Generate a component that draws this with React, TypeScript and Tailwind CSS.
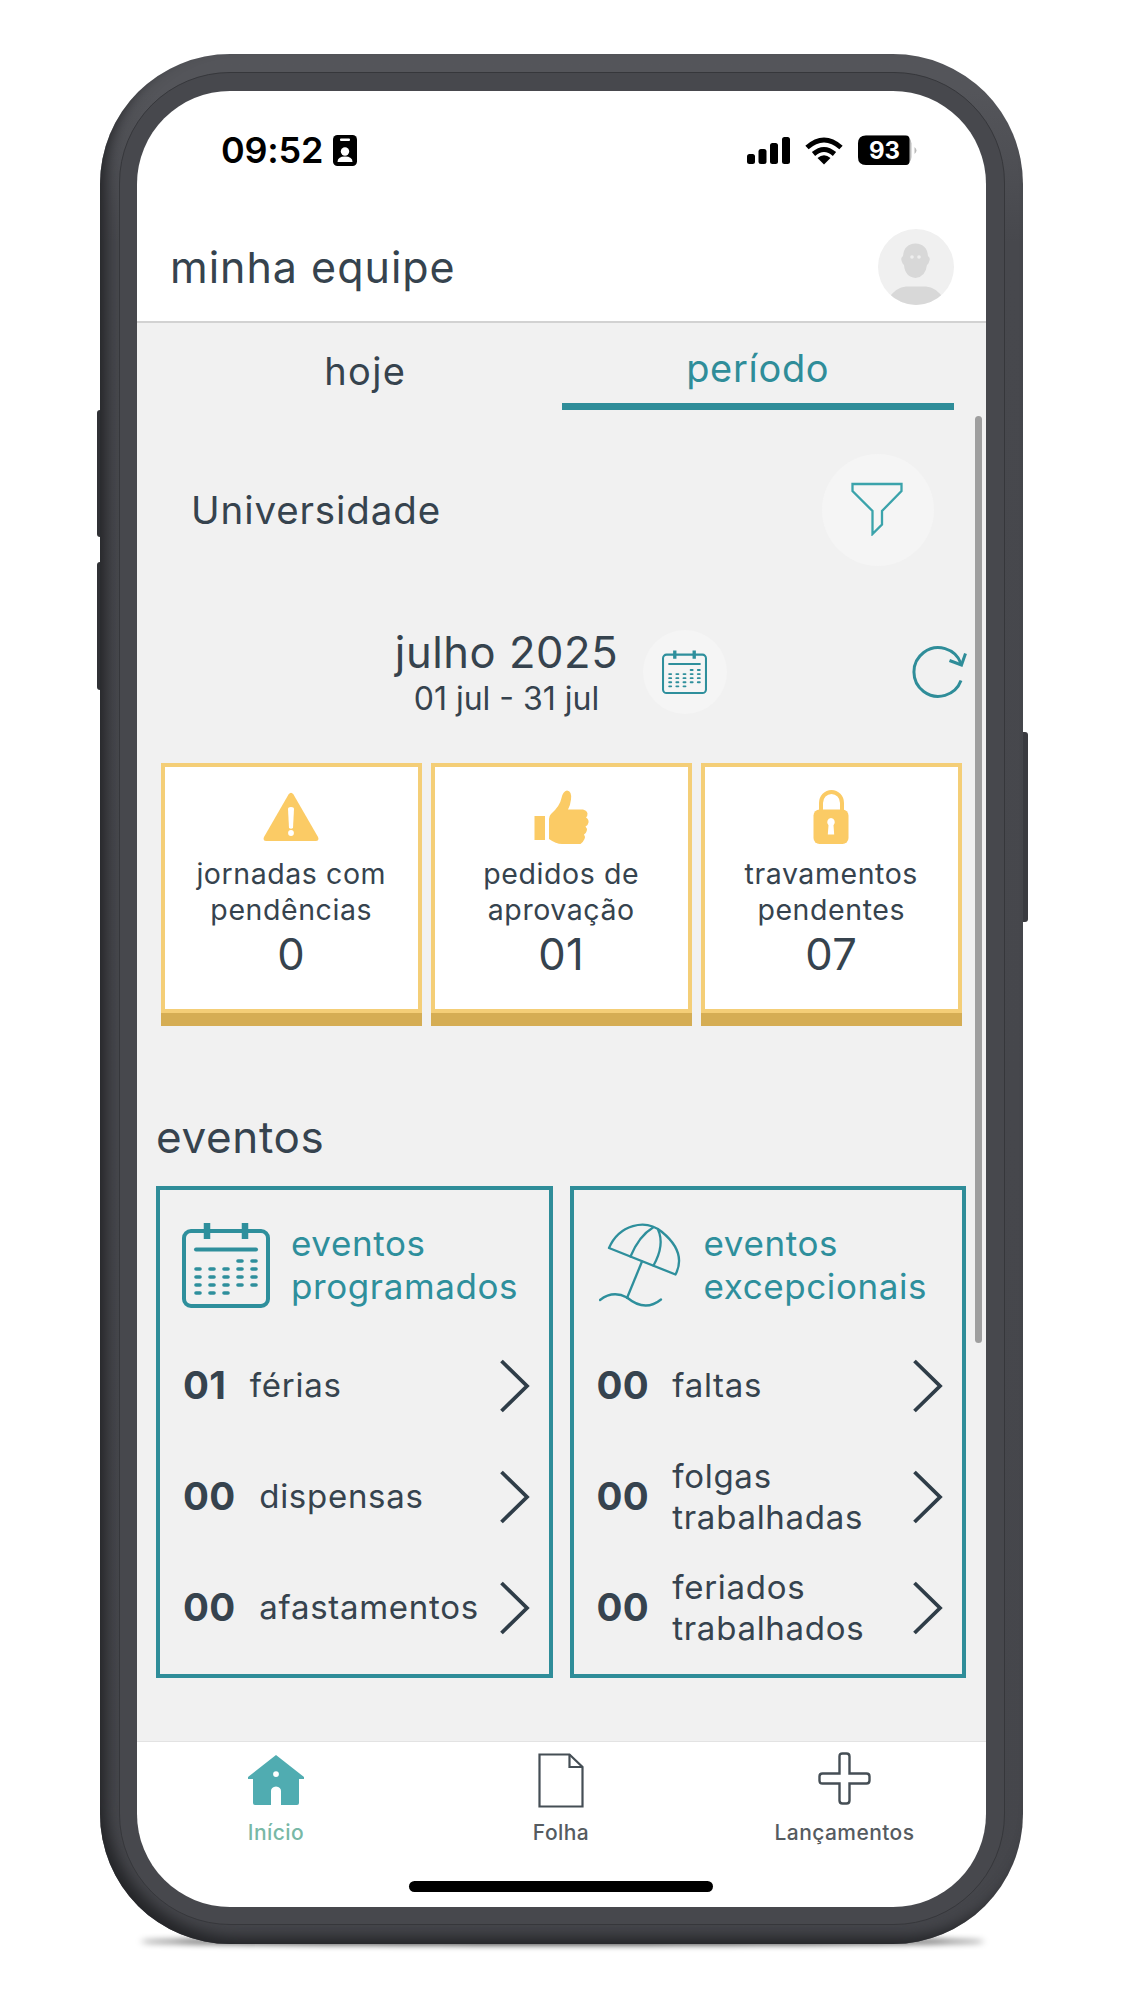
import type { ReactNode } from "react"

const programados = [
  { count: "01", label: ["férias"] },
  { count: "00", label: ["dispensas"] },
  { count: "00", label: ["afastamentos"] },
]

const excepcionais = [
  { count: "00", label: ["faltas"] },
  { count: "00", label: ["folgas", "trabalhadas"] },
  { count: "00", label: ["feriados", "trabalhados"] },
]

function CalendarIcon({ className, stroke }: { className: string; stroke: number }) {
  const cols = [16, 30, 44, 58, 72]
  return (
    <svg viewBox="0 0 88 86" className={className} fill="none" stroke="#2e8f9c" strokeWidth={stroke}>
      <rect x="2" y="9" width="84" height="75" rx="7" />
      <path d="M25 1v16M63 1v16" strokeWidth="6.500" />
      <path d="M14 27.500h60" strokeLinecap="round" />
      {cols.map((x, i) => (i < 3 ? [47, 55, 63, 71] : [39, 47, 55, 63]).map((y) => <path key={x + "-" + y} d={`M${x - 2} ${y}h4`} strokeLinecap="round" strokeWidth="3.600" />))}
    </svg>
  )
}

function WarningIcon() {
  return (
    <svg viewBox="0 0 56 54" className="h-[54px] w-[56px]" fill="#fbcb65">
      <path d="M25.500 4.500q2.500-3.500 5 0L55 47q1.500 4-2 4H3q-3.500 0-2-4z" />
      <path d="M25 19q0-2 3-2t3 2l-1 19q-2 1.500-4 0z" fill="#fff" />
      <circle cx="28" cy="43" r="2.900" fill="#fff" />
    </svg>
  )
}

function ThumbIcon() {
  return (
    <svg viewBox="0 0 55 54" className="h-[54px] w-[55px]" fill="#fbcb65">
      <rect x="0.500" y="26" width="10.500" height="24" />
      <path d="M15 29q0-3 2-5 9-8 10.500-16Q29 1 33 .5q5 .5 4 9-.5 5-3 10h15q4 1 4.500 4 .2 2.500-1.500 4 3 2 2.500 5-.3 2.500-3 4 2 2 1.200 4.500-.7 2.500-2.700 3.500 1.500 2 .5 4.500t-4 5H28q-6 0-13-5z" />
    </svg>
  )
}

function LockIcon() {
  return (
    <svg viewBox="0 0 36 54" className="h-[54px] w-[36px]" fill="#fbcb65">
      <path d="M8 22V13a10.500 11 0 0 1 21 0v9" fill="none" stroke="#fbcb65" strokeWidth="4" />
      <rect x="0.500" y="19.500" width="35" height="34.500" rx="6" />
      <path d="M18 28a4.200 4.200 0 0 1 2.500 7.200l.7 9.300h-6.400l.7-9.300A4.200 4.200 0 0 1 18 28z" fill="#fff" />
    </svg>
  )
}

function UmbrellaIcon() {
  return (
    <svg viewBox="0 0 82 84" className="ml-[3px] h-[84px] w-[82px] shrink-0" fill="none" stroke="#2e8f9c" strokeWidth="2.300" strokeLinecap="round" strokeLinejoin="round">
      <path d="M10 25C20 2 46-5 63 9S84 37 76.500 51.500z" />
      <path d="M31.500 33.500Q40 13 54 4.500" />
      <path d="M59 6.500Q66 22 54.500 42.500" />
      <path d="M43 38.500 28 75" />
      <path d="M1 77Q14 67 28 74.500q18 15 34 2" />
    </svg>
  )
}

function AlertCard({ icon, lines, value }: { icon: ReactNode; lines: string[]; value: string }) {
  return (
    <div className="flex h-[263px] flex-1 flex-col border-b-[13px] border-[#d5ad54]">
      <div className="flex flex-1 flex-col items-center border-[4.500px] border-[#f4ce77] bg-white pt-[23px] text-center">
        {icon}
        <div className="mt-[12px] text-[28.500px] leading-[35.500px] tracking-[0.02em]">{lines.map((l) => <div key={l}>{l}</div>)}</div>
        <div className="mt-px text-[43.500px] leading-[52px] tracking-[0.01em]">{value}</div>
      </div>
    </div>
  )
}

function EventCard({ icon, title, rows, wide }: { icon: ReactNode; title: string[]; rows: typeof programados; wide?: boolean }) {
  return (
    <div className="flex h-[492px] flex-1 flex-col border-[4.500px] border-[#2f8d99] pt-[32px] pl-[22px]">
      <div className={`flex h-[86px] items-center text-[#2e8f9c] ${wide ? "gap-[23px]" : "gap-[21px]"}`}>
        {icon}
        <div className="text-[35px] leading-[43.500px] tracking-[0.017em]">{title.map((l) => <div key={l}>{l}</div>)}</div>
      </div>
      <div className="mt-[22px] flex flex-col">
        {rows.map((r) => (
          <div key={r.label[0]} className="flex h-[111px] items-center pr-[19px] pl-[1px]">
            <span className="text-[38.500px] font-bold tracking-[0.01em]">{r.count}</span>
            <div className={`flex-1 whitespace-nowrap text-[33px] leading-[40.500px] tracking-[0.022em] ${wide ? "ml-[23px]" : "ml-[23.500px]"}`}>{r.label.map((l) => <div key={l}>{l}</div>)}</div>
            <svg viewBox="0 0 30 54" className="h-[54px] w-[30px] shrink-0" fill="none" stroke="#2f3d48" strokeWidth="3.800"><path d="M1.500 2 27 27 1.500 52" /></svg>
          </div>
        ))}
      </div>
    </div>
  )
}

function StatusBar() {
  return (
    <div className="flex h-[118px] items-center pr-[68px] pl-[84px] text-black">
      <span className="w-[112px] text-[36px] font-semibold tracking-[-0.006em]">09:52</span>
      <svg viewBox="0 0 24 31" className="h-[31px] w-[24px]">
        <rect width="24" height="31" rx="4.500" />
        <rect x="7" y="3.500" width="10" height="2.500" rx="1" fill="#fff" />
        <circle cx="12" cy="16.500" r="4.200" fill="#fff" />
        <path d="M4.500 27q0-5.500 7.500-5.500t7.500 5.500z" fill="#fff" />
      </svg>
      <svg viewBox="0 0 171 32" className="ml-auto h-[32px] w-[171px]">
        <rect x="0" y="20" width="8" height="10" rx="2.500" />
        <rect x="11.500" y="15" width="8" height="15" rx="2.500" />
        <rect x="23" y="9" width="8" height="21" rx="2.500" />
        <rect x="35" y="3" width="8" height="27" rx="2.500" />
        <g fill="none" stroke="#000" strokeWidth="5">
          <path d="M60 13.500q17-15 34 0" />
          <path d="M66.500 20q10.500-9 21 0" />
        </g>
        <path d="M70.500 24q6.500-5.500 13 0L77 30.500z" />
        <rect x="111" y="1.500" width="53.500" height="29.500" rx="8" fill="#bbb" />
        <path d="M119 1.500h40q3.500 0 3.500 4v21.500q0 4-3.500 4h-40q-8 0-8-8v-13.500q0-8 8-8z" />
        <path d="M167.500 13q4 3.500 0 7z" fill="#bbb" />
        <text x="137.500" y="25" textAnchor="middle" fill="#fff" fontSize="24" fontWeight="700">93</text>
      </svg>
    </div>
  )
}

function NavItem({ icon, label, color }: { icon: ReactNode; label: string; color: string }) {
  return (
    <div className={`flex flex-col items-center ${color}`}>
      <div className="flex h-[56px] items-center">{icon}</div>
      <span className="mt-[11px] text-[21px] leading-[28px] font-[450] tracking-[0.02em]">{label}</span>
    </div>
  )
}

export default function App() {
  return (
    <div className="relative h-[2000px] w-[1125px] overflow-hidden bg-white pt-[53.500px] pl-[100px] font-['Inter','Liberation_Sans',sans-serif] font-[430] text-[#36434e]">
      <div className="absolute top-[1938px] left-[140px] h-[7px] w-[845px] rounded-[50%] bg-black/80 blur-[3px]" />
      <div className="absolute top-[410px] left-[97px] h-[127px] w-[8px] rounded-[3px] bg-[#303135]" />
      <div className="absolute top-[562px] left-[97px] h-[128px] w-[8px] rounded-[3px] bg-[#303135]" />
      <div className="absolute top-[732px] left-[1018px] h-[190px] w-[10px] rounded-[3px] bg-[#3a3b40]" />

      <div className="relative h-[1890px] w-[923px] rounded-[130px] bg-linear-to-b from-[#54555a] from-2% via-[#47484d] via-10% to-[#45464b] p-[18.500px] shadow-[inset_9px_-10px_14px_-3px_#242528]">
        <div className="h-full w-full rounded-[111px] border border-[#36373b] bg-[#47484d] px-[17.500px] pt-[18px] pb-[17px]">
          <div className="relative flex h-[1816px] w-[849px] flex-col overflow-hidden rounded-[93px] bg-white">
            <StatusBar />

            <div className="flex h-[114px] shrink-0 items-center justify-between border-b-2 border-[#d2d2d2] pt-[3px] pr-[32px] pl-[33px]">
              <h1 className="mt-[2px] text-[43px] tracking-[0.023em]">minha equipe</h1>
              <svg viewBox="0 0 76 76" className="h-[76px] w-[76px]">
                <clipPath id="avatar"><circle cx="38" cy="38" r="38" /></clipPath>
                <circle cx="38" cy="38" r="38" fill="#f0f0f0" />
                <g fill="#d8d8d8" clipPath="url(#avatar)">
                  <path d="M25 27q1-12 12.500-12.500Q49 15 50 27q3 2 1 6-.5 2-2 3-1.500 12-11.500 13Q27 48 26 36q-1.500-1-2-3-2-4 1-6z" />
                  <path d="M10 76V70q8-12 18-12.500h20q10 .5 18 12.500v6z" />
                </g>
                <circle cx="34" cy="28" r="1.800" fill="#eee" />
                <circle cx="41" cy="28" r="1.800" fill="#eee" />
              </svg>
            </div>

            <main className="relative flex h-[1418px] shrink-0 flex-col bg-[#f1f1f1]">
              <div className="flex h-[87px] shrink-0 pr-[32px] pl-[32px] text-center text-[38px] tracking-[0.018em]">
                <div className="flex-1 pt-[20px] leading-[56px] tracking-[0.035em]">hoje</div>
                <div className="flex-1 border-b-[7px] border-[#2f8d99] pt-[17px] leading-[56px] text-[#2f8d99]">período</div>
              </div>

              <div className="mt-[44px] flex h-[112px] items-center justify-between pr-[52px] pl-[54px]">
                <span className="mt-[2px] text-[38.500px] tracking-[0.023em]">Universidade</span>
                <div className="flex h-[112px] w-[112px] items-center justify-center rounded-full bg-[#f5f5f5] pr-[2px] pb-[2px]">
                  <svg viewBox="0 0 52 54" className="h-[54px] w-[52px]" fill="none" stroke="#3ba3ab" strokeWidth="2.300"><path d="M1.500 2h49v7L31 29v13.500L21.500 52V29L1.500 9z" /></svg>
                </div>
              </div>

              <div className="mt-[64px] flex h-[84px] items-center pl-[257px]">
                <div className="flex w-[225px] flex-col items-center pt-[6px] whitespace-nowrap">
                  <div className="text-[43.500px] leading-[46px] tracking-[0.013em]">julho 2025</div>
                  <div className="text-[32px] leading-[47px]">01 jul - 31 jul</div>
                </div>
                <div className="ml-[24px] flex h-[84px] w-[84px] items-center justify-center rounded-full bg-[#f5f5f5] pr-[2px]">
                  <CalendarIcon className="h-[44px] w-[45px]" stroke={4} />
                </div>
                <svg viewBox="0 0 56 52" className="ml-[184px] h-[52px] w-[56px]" fill="none" stroke="#2f8d99" strokeWidth="3">
                  <path d="M50 17.500A24.300 24.300 0 1 0 50 34.500" />
                  <path d="M38.500 14.500 50.500 19 54.500 7.500" />
                </svg>
              </div>

              <div className="mt-[49px] flex gap-[8.500px] pr-[24px] pl-[23.500px]">
                <AlertCard icon={<WarningIcon />} lines={["jornadas com", "pendências"]} value="0" />
                <AlertCard icon={<ThumbIcon />} lines={["pedidos de", "aprovação"]} value="01" />
                <AlertCard icon={<LockIcon />} lines={["travamentos", "pendentes"]} value="07" />
              </div>

              <h2 className="mt-[84px] pl-[19px] text-[44px] leading-[54px] tracking-[0.015em]">eventos</h2>
              <div className="mt-[22px] flex gap-[17px] pr-[20px] pl-[19px]">
                <EventCard icon={<CalendarIcon className="h-[86px] w-[88px] shrink-0" stroke={4} />} title={["eventos", "programados"]} rows={programados} />
                <EventCard icon={<UmbrellaIcon />} title={["eventos", "excepcionais"]} rows={excepcionais} wide />
              </div>

              {/* scroll thumb floats over the content */}
              <div className="absolute top-[93px] right-[4px] h-[927px] w-[7px] rounded-full bg-[#9f9f9f]" />
            </main>

            <nav className="grid h-[140px] shrink-0 grid-cols-[278px_292px_275px] border-t border-[#e3e3e3] pt-[10px]">
              <NavItem
                label="Início"
                color="text-[#78b8a6]"
                icon={
                  <svg viewBox="0 0 56 50" className="h-[50px] w-[56px]" fill="#50acb1">
                    <path fillRule="evenodd" d="M28 0 56 22v2h-5v24q0 2-2 2H33V36q0-4-5-4.500-5 .5-5 4.500v14H7q-2 0-2-2V24H0v-2zM28 16.200a2.900 2.900 0 1 0 .01 5.800 2.900 2.900 0 0 0 0-5.800z" />
                  </svg>
                }
              />
              <NavItem
                label="Folha"
                color="text-[#555b60]"
                icon={
                  <svg viewBox="0 0 46 55" className="h-[55px] w-[46px]" fill="none" stroke="#454e55" strokeWidth="2.200">
                    <path d="M1.500 1.500h30L44.500 14v39.500h-43z" />
                    <path d="M31.500 1.500V14h13" />
                  </svg>
                }
              />
              <NavItem
                label="Lançamentos"
                color="text-[#555b60]"
                icon={
                  <svg viewBox="0 0 53 53" className="mb-[3px] h-[53px] w-[53px]" fill="none" stroke="#454e55" strokeWidth="2.400">
                    <path d="M24.500 1.500h4q3 0 3 3v17h17q3 0 3 3v4q0 3-3 3h-17v17q0 3-3 3h-4q-3 0-3-3v-17h-17q-3 0-3-3v-4q0-3 3-3h17v-17q0-3 3-3z" />
                  </svg>
                }
              />
            </nav>
            <div className="ml-[272px] h-[11px] w-[304px] shrink-0 rounded-full bg-black" />
          </div>
        </div>
      </div>
    </div>
  )
}
